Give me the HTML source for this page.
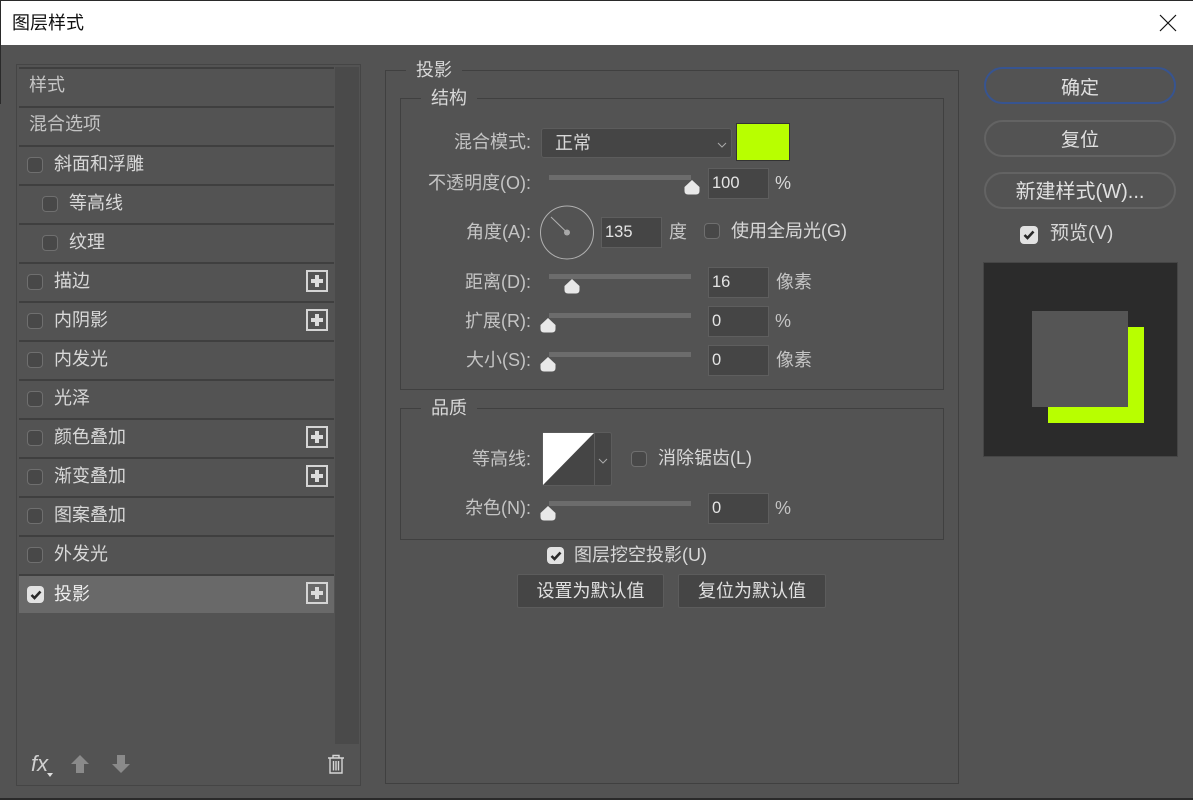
<!DOCTYPE html>
<html><head><meta charset="utf-8"><style>
html,body{margin:0;padding:0}
body{width:1193px;height:800px;overflow:hidden;position:relative;background:#535353;font-family:"Liberation Sans","Noto Sans CJK SC",sans-serif;font-size:18px;color:#d8d8d8}
div,svg{position:absolute;box-sizing:border-box}
.t{white-space:nowrap;line-height:24px;height:24px}
.d{color:#c4c4c4}
.r{text-align:right}
.row{left:19px;width:315px;height:2px;background:#3f3f3f}
.cb{width:16px;height:16px;border:1px solid #6f6f6f;border-radius:4px;background:#484848}
.on{width:17px;height:17px;background:#e2e2e2;border:0;border-radius:4px}
.on svg{left:3px;top:4px}
.p{left:306px;width:22px;height:22px;border:2px solid #d4d4d4}
.p:before{content:"";position:absolute;left:3px;top:7px;width:12px;height:4px;background:#dcdcdc}
.p:after{content:"";position:absolute;left:7px;top:3px;width:4px;height:12px;background:#dcdcdc}
.g{border:1px solid #404040}
.lb{background:#535353;text-align:center}
.tr{left:549px;width:142px;height:5px;background:#6c6c6c}
.in{left:708px;width:61px;height:31px;background:#454545;border:1px solid #5e5e5e;padding-left:3px;line-height:29px;color:#e4e4e4;font-size:16.5px}
.b{left:984px;width:192px;height:37px;border:2px solid #636363;border-radius:19px;text-align:center;line-height:37px;color:#e0e0e0;font-size:20px;white-space:nowrap}
.bb{height:34px;top:574px;background:#454545;border:1px solid #5c5c5c;border-radius:2px;text-align:center;line-height:33px;color:#e0e0e0}
</style></head><body>
<div style="left:0;top:0;width:1193px;height:1px;background:#2a2a2a"></div>
<div style="left:1px;top:1px;width:1192px;height:44px;background:#fff"></div>
<div style="left:0;top:1px;width:1px;height:103px;background:#2a2a2a"></div>
<div style="left:0;top:798px;width:1193px;height:2px;background:#2a2a2a"></div>
<div class="t" style="left:12px;top:11px;color:#111;font-size:18px">图层样式</div>
<svg style="left:1159px;top:14px" width="18" height="18"><path d="M1 1L17 17M17 1L1 17" stroke="#111" stroke-width="1.2" fill="none"/></svg>

<!-- left panel -->
<div style="left:16px;top:64px;width:345px;height:722px;border:1px solid #454545"></div>
<div style="left:335px;top:67px;width:24px;height:677px;background:#4a4a4a"></div>
<div class="row" style="top:67px"></div><div class="row" style="top:106px"></div><div class="row" style="top:145px"></div><div class="row" style="top:184px"></div><div class="row" style="top:223px"></div><div class="row" style="top:262px"></div><div class="row" style="top:301px"></div><div class="row" style="top:340px"></div><div class="row" style="top:379px"></div><div class="row" style="top:418px"></div><div class="row" style="top:457px"></div><div class="row" style="top:496px"></div><div class="row" style="top:535px"></div><div class="row" style="top:574px"></div>
<div style="left:19px;top:576px;width:315px;height:37px;background:#696969"></div>
<div class="t d" style="left:29px;top:73px">样式</div>
<div class="t d" style="left:29px;top:112px">混合选项</div>
<div class="cb" style="left:27px;top:157px"></div><div class="t" style="left:54px;top:152px">斜面和浮雕</div>
<div class="cb" style="left:42px;top:196px"></div><div class="t" style="left:69px;top:191px">等高线</div>
<div class="cb" style="left:42px;top:235px"></div><div class="t" style="left:69px;top:230px">纹理</div>
<div class="cb" style="left:27px;top:274px"></div><div class="t" style="left:54px;top:269px">描边</div><div class="p" style="top:270px"></div>
<div class="cb" style="left:27px;top:313px"></div><div class="t" style="left:54px;top:308px">内阴影</div><div class="p" style="top:309px"></div>
<div class="cb" style="left:27px;top:352px"></div><div class="t" style="left:54px;top:347px">内发光</div>
<div class="cb" style="left:27px;top:391px"></div><div class="t" style="left:54px;top:386px">光泽</div>
<div class="cb" style="left:27px;top:430px"></div><div class="t" style="left:54px;top:425px">颜色叠加</div><div class="p" style="top:426px"></div>
<div class="cb" style="left:27px;top:469px"></div><div class="t" style="left:54px;top:464px">渐变叠加</div><div class="p" style="top:465px"></div>
<div class="cb" style="left:27px;top:508px"></div><div class="t" style="left:54px;top:503px">图案叠加</div>
<div class="cb" style="left:27px;top:547px"></div><div class="t" style="left:54px;top:542px">外发光</div>
<div class="cb on" style="left:27px;top:586px"><svg width="12" height="10"><path d="M1.500 5L4.500 8L10.500 1.500" stroke="#2a2a2a" stroke-width="2.600" fill="none"/></svg></div><div class="t" style="left:54px;top:582px;color:#eee">投影</div><div class="p" style="top:582px"></div>

<div class="t" style="left:31px;top:752px;font-family:'Liberation Sans',sans-serif;font-style:italic;font-size:22px;color:#d0d0d0">fx</div>
<svg style="left:47px;top:773px" width="7" height="5"><path d="M0 0H6L3 4Z" fill="#ddd"/></svg>
<svg style="left:71px;top:755px" width="18" height="19"><path d="M9 0L18 9H13V18H5V9H0Z" fill="#8a8a8a"/></svg>
<svg style="left:112px;top:755px" width="18" height="19"><path d="M9 18L18 9H13V0H5V9H0Z" fill="#8a8a8a"/></svg>
<svg style="left:327px;top:754px" width="18" height="20" fill="none" stroke="#d6d6d6" stroke-width="1.400"><path d="M1 4H17M6 4V1.500H12V4M3 4V19H15V4M6.500 7V16.500M9 7V16.500M11.500 7V16.500"/></svg>

<!-- middle -->
<div class="g" style="left:385px;top:70px;width:574px;height:714px"></div>
<div class="t lb" style="left:406px;top:58px;width:56px">投影</div>
<div class="g" style="left:400px;top:98px;width:544px;height:292px"></div>
<div class="t lb" style="left:421px;top:86px;width:56px">结构</div>
<div class="g" style="left:400px;top:408px;width:544px;height:132px"></div>
<div class="t lb" style="left:421px;top:396px;width:56px">品质</div>

<div class="t d r" style="left:399px;top:130px;width:132px">混合模式:</div>
<div style="left:541px;top:128px;width:191px;height:30px;background:#454545;border:1px solid #5c5c5c;border-radius:3px"></div>
<div class="t" style="left:555px;top:131px">正常</div>
<svg style="left:717px;top:142px" width="10" height="6"><path d="M1 1L5 5L9 1" stroke="#aaa" fill="none"/></svg>
<div style="left:736px;top:123px;width:54px;height:38px;background:#b8ff00;border:1px solid #333"></div>

<div class="t d r" style="left:399px;top:171px;width:132px">不透明度(O):</div>
<div class="tr" style="top:175px"></div>
<svg style="left:684px;top:180px" width="16" height="15"><path d="M8 0L15.500 7V11Q15.500 14.500 12 14.500H4Q.5 14.500 .5 11V7Z" fill="#e8e8e8"/></svg>
<div class="in" style="top:168px">100</div><div class="t" style="left:775px;top:171px">%</div>

<div class="t d r" style="left:399px;top:220px;width:132px">角度(A):</div>
<svg style="left:539px;top:205px" width="56" height="56" fill="none"><circle cx="28" cy="27.500" r="26.500" stroke="#b0b0b0"/><path d="M12 12L28 27.500" stroke="#b0b0b0"/><circle cx="28" cy="27.500" r="3" fill="#a8a8a8"/></svg>
<div class="in" style="left:601px;top:217px">135</div><div class="t d" style="left:669px;top:220px">度</div>
<div class="cb" style="left:704px;top:223px"></div><div class="t" style="left:731px;top:219px">使用全局光(G)</div>

<div class="t d r" style="left:399px;top:270px;width:132px">距离(D):</div>
<div class="tr" style="top:274px"></div>
<svg style="left:564px;top:279px" width="16" height="15"><path d="M8 0L15.500 7V11Q15.500 14.500 12 14.500H4Q.5 14.500 .5 11V7Z" fill="#e8e8e8"/></svg>
<div class="in" style="top:267px">16</div><div class="t d" style="left:776px;top:270px">像素</div>

<div class="t d r" style="left:399px;top:309px;width:132px">扩展(R):</div>
<div class="tr" style="top:313px"></div>
<svg style="left:540px;top:318px" width="16" height="15"><path d="M8 0L15.500 7V11Q15.500 14.500 12 14.500H4Q.5 14.500 .5 11V7Z" fill="#e8e8e8"/></svg>
<div class="in" style="top:306px">0</div><div class="t d" style="left:775px;top:309px">%</div>

<div class="t d r" style="left:399px;top:348px;width:132px">大小(S):</div>
<div class="tr" style="top:352px"></div>
<svg style="left:540px;top:357px" width="16" height="15"><path d="M8 0L15.500 7V11Q15.500 14.500 12 14.500H4Q.5 14.500 .5 11V7Z" fill="#e8e8e8"/></svg>
<div class="in" style="top:345px">0</div><div class="t d" style="left:776px;top:348px">像素</div>

<div class="t d r" style="left:399px;top:447px;width:132px">等高线:</div>
<svg style="left:542px;top:432px" width="71" height="54"><rect x=".5" y=".5" width="69" height="53" rx="2" fill="#454545" stroke="#5c5c5c"/><path d="M1 1H52L1 53Z" fill="#fff"/><path d="M52.500 1V53" stroke="#5c5c5c"/><path d="M57 27L61 31L65 27" stroke="#aaa" fill="none"/></svg>
<div class="cb" style="left:631px;top:451px"></div><div class="t" style="left:658px;top:446px">消除锯齿(L)</div>

<div class="t d r" style="left:399px;top:496px;width:132px">杂色(N):</div>
<div class="tr" style="top:501px"></div>
<svg style="left:540px;top:506px" width="16" height="15"><path d="M8 0L15.500 7V11Q15.500 14.500 12 14.500H4Q.5 14.500 .5 11V7Z" fill="#e8e8e8"/></svg>
<div class="in" style="top:493px">0</div><div class="t d" style="left:775px;top:496px">%</div>

<div class="cb on" style="left:547px;top:547px"><svg width="12" height="10"><path d="M1.500 5L4.500 8L10.500 1.500" stroke="#2a2a2a" stroke-width="2.600" fill="none"/></svg></div>
<div class="t" style="left:574px;top:543px">图层挖空投影(U)</div>
<div class="bb" style="left:517px;width:147px">设置为默认值</div>
<div class="bb" style="left:678px;width:148px">复位为默认值</div>

<!-- right -->
<div class="b" style="top:67px;border-color:#375490;line-height:39px;font-size:19px">确定</div>
<div class="b" style="top:120px;font-size:19px">复位</div>
<div class="b" style="top:172px">新建样式(W)...</div>
<div class="cb on" style="left:1020px;top:226px;width:18px;height:18px"><svg width="12" height="10"><path d="M1.500 5L4.500 8L10.500 1.500" stroke="#2a2a2a" stroke-width="2.600" fill="none"/></svg></div>
<div class="t" style="left:1050px;top:222px;font-size:19px">预览(V)</div>
<div style="left:983px;top:262px;width:195px;height:195px;background:#2b2b2b;border:1px solid #454545"></div>
<div style="left:1048px;top:327px;width:96px;height:96px;background:#b8ff00"></div>
<div style="left:1032px;top:311px;width:96px;height:96px;background:#555"></div>
</body></html>
